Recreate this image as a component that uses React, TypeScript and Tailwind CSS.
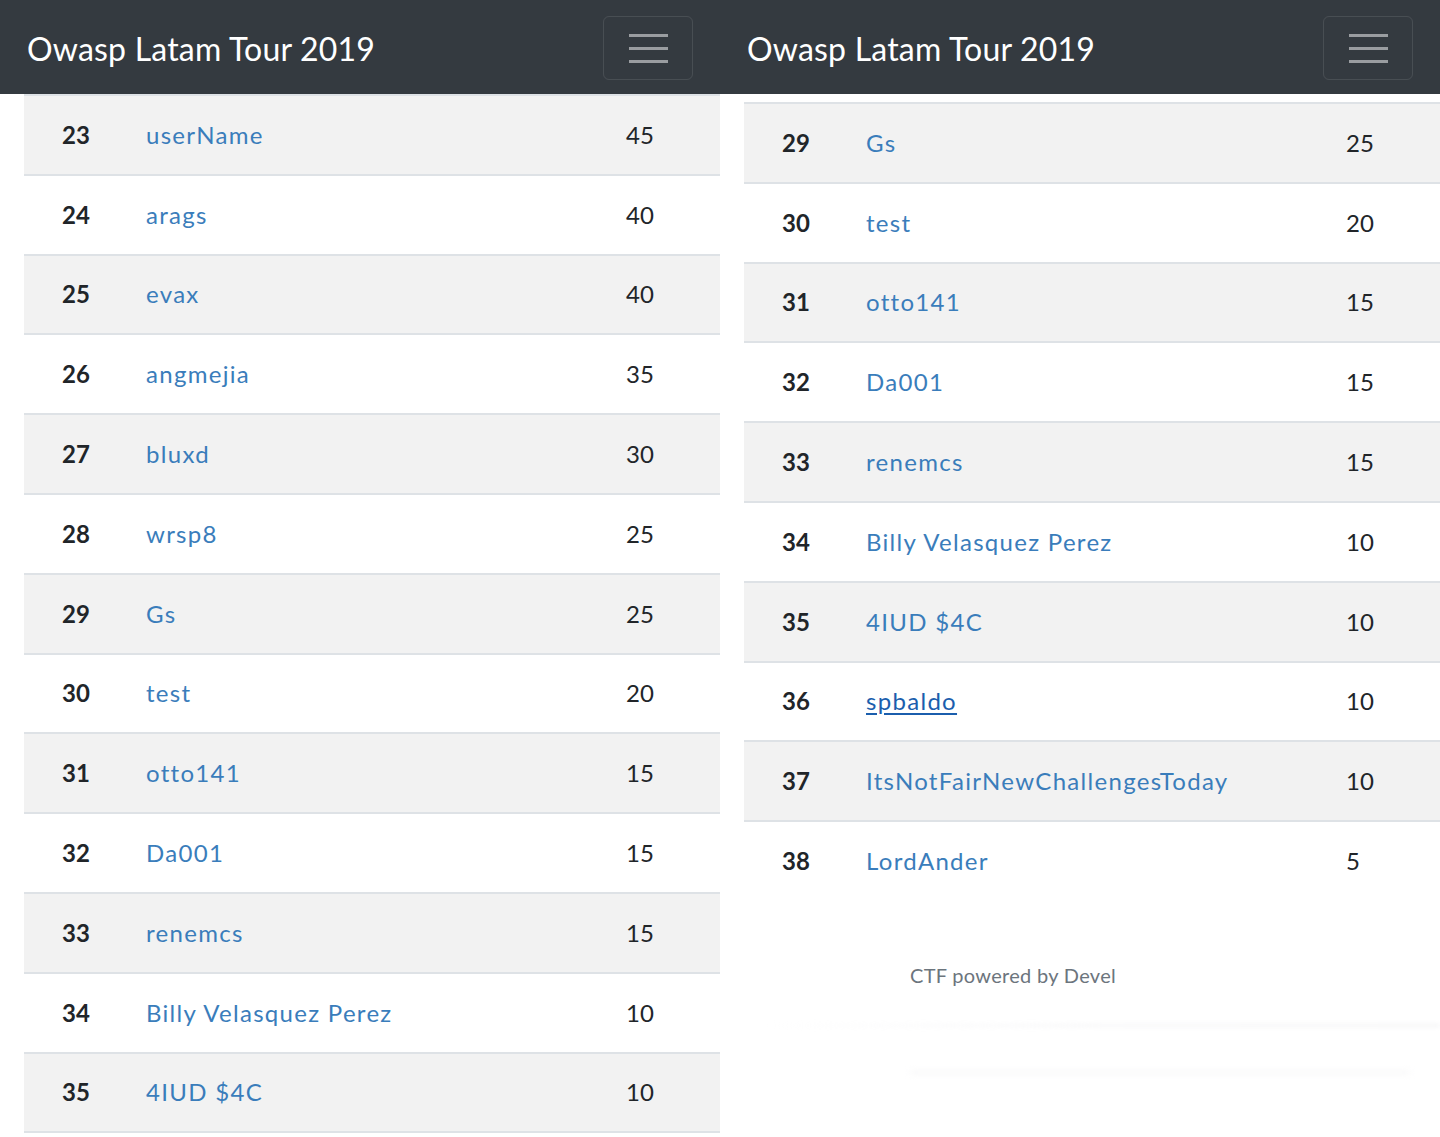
import React from 'react';

interface Entry {
  rank: number;
  name: string;
  score: number;
  hover?: boolean;
}

const leftRows: Entry[] = [
  { rank: 23, name: 'userName', score: 45 },
  { rank: 24, name: 'arags', score: 40 },
  { rank: 25, name: 'evax', score: 40 },
  { rank: 26, name: 'angmejia', score: 35 },
  { rank: 27, name: 'bluxd', score: 30 },
  { rank: 28, name: 'wrsp8', score: 25 },
  { rank: 29, name: 'Gs', score: 25 },
  { rank: 30, name: 'test', score: 20 },
  { rank: 31, name: 'otto141', score: 15 },
  { rank: 32, name: 'Da001', score: 15 },
  { rank: 33, name: 'renemcs', score: 15 },
  { rank: 34, name: 'Billy Velasquez Perez', score: 10 },
  { rank: 35, name: '4IUD $4C', score: 10 },
];

const rightRows: Entry[] = [
  { rank: 29, name: 'Gs', score: 25 },
  { rank: 30, name: 'test', score: 20 },
  { rank: 31, name: 'otto141', score: 15 },
  { rank: 32, name: 'Da001', score: 15 },
  { rank: 33, name: 'renemcs', score: 15 },
  { rank: 34, name: 'Billy Velasquez Perez', score: 10 },
  { rank: 35, name: '4IUD $4C', score: 10 },
  { rank: 36, name: 'spbaldo', score: 10, hover: true },
  { rank: 37, name: 'ItsNotFairNewChallengesToday', score: 10 },
  { rank: 38, name: 'LordAnder', score: 5 },
];

function Navbar() {
  return (
    <div className="h-[94px] shrink-0 bg-[#343a40] flex items-center justify-between pl-[27px] pr-[27px]">
      <span className="pt-[4px] text-[32px] text-white leading-none tracking-[0.2px]">Owasp Latam Tour 2019</span>
      <button className="mt-[2px] w-[90px] h-[64px] rounded-[6px] border border-white/10 flex flex-col items-center justify-center gap-[10px]">
        <span className="block w-[39px] h-[3px] bg-[#9a9da1]" />
        <span className="block w-[39px] h-[3px] bg-[#9a9da1]" />
        <span className="block w-[39px] h-[3px] bg-[#9a9da1]" />
      </button>
    </div>
  );
}

function Row({ entry }: { entry: Entry }) {
  const striped = entry.rank % 2 === 1;
  return (
    <div
      className={`h-[79.8px] border-t-2 border-[#dee2e6] flex items-center text-[24px] text-[#212529] ${
        striped ? 'bg-[#f2f2f2]' : 'bg-white'
      }`}
    >
      <span className="w-[122px] pl-[38px] font-bold">{entry.rank}</span>
      <a
        href="#"
        className={`flex-1 whitespace-nowrap tracking-[1.3px] ${
          entry.hover ? 'text-[#1b5ead] underline underline-offset-[3px] decoration-[2px]' : 'text-[#3a7dbb]'
        }`}
      >
        {entry.name}
      </a>
      <span className="w-[94px]">{entry.score}</span>
    </div>
  );
}

export default function App() {
  return (
    <div
      className="w-[1440px] h-[1137px] overflow-hidden bg-white flex"
      style={{ fontFamily: 'Lato, "Open Sans", sans-serif' }}
    >
      {/* Left screen */}
      <div className="w-[720px] flex flex-col overflow-hidden">
        <Navbar />
        <div className="pl-[24px]">
          {leftRows.map((r) => (
            <Row key={r.rank} entry={r} />
          ))}
          <div className="h-[2px] bg-[#dee2e6]" />
        </div>
      </div>

      {/* Right screen */}
      <div className="w-[720px] flex flex-col overflow-hidden">
        <Navbar />
        <div className="pl-[24px] pt-[8px]">
          {rightRows.map((r) => (
            <Row key={r.rank} entry={r} />
          ))}
        </div>
        <div className="pt-[60px] pl-[190px] text-[20px] text-[#6c757d] leading-[30px] tracking-[0.3px]">
          CTF powered by Devel
        </div>
        <div className="mt-[34px] flex flex-col gap-[44px]">
          <div className="h-[3px] ml-[40px] bg-gradient-to-r from-transparent via-[#f7f7f8] to-[#f4f4f5] blur-[2px]" />
          <div className="h-[3px] ml-[190px] mr-[30px] bg-[#f5f5f6] blur-[3px]" />
        </div>
      </div>
    </div>
  );
}
